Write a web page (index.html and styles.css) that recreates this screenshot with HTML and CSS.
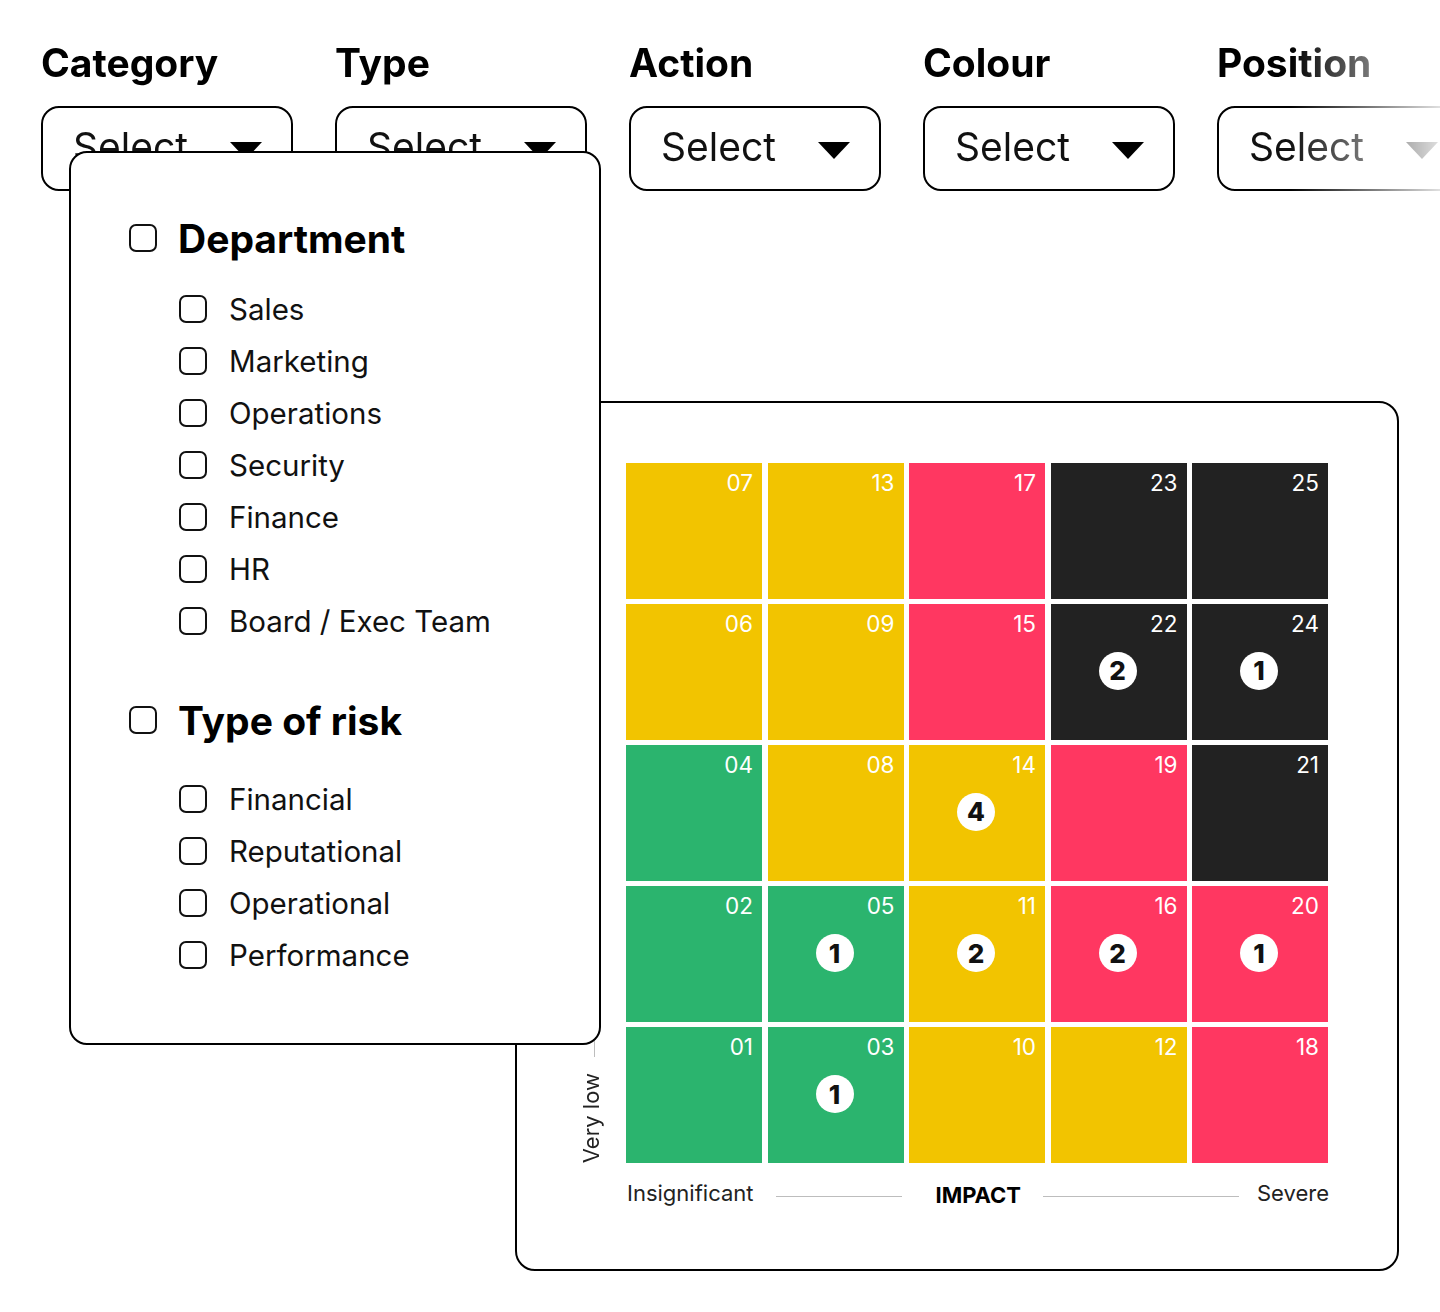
FILE: index.html
```html
<!DOCTYPE html>
<html lang="en">
<head>
<meta charset="utf-8">
<title>Risk matrix filters</title>
<link rel="stylesheet" href="styles.css">
</head>
<body>
<div class="page">
  <div class="filters">
    <div class="filter">
      <div class="filter-label">Category</div>
      <div class="select"><span>Select</span><i class="caret"></i></div>
    </div>
    <div class="filter">
      <div class="filter-label">Type</div>
      <div class="select"><span>Select</span><i class="caret"></i></div>
    </div>
    <div class="filter">
      <div class="filter-label">Action</div>
      <div class="select"><span>Select</span><i class="caret"></i></div>
    </div>
    <div class="filter">
      <div class="filter-label">Colour</div>
      <div class="select"><span>Select</span><i class="caret"></i></div>
    </div>
    <div class="filter">
      <div class="filter-label">Position</div>
      <div class="select"><span>Select</span><i class="caret"></i></div>
    </div>
  </div>

  <div class="matrix-card">
    <div class="matrix-body">
      <div class="y-axis">
        <div class="y-line"></div>
        <div class="y-label">Very low</div>
      </div>
      <div class="grid">
        <div class="cell yellow"><span class="num">07</span></div>
        <div class="cell yellow"><span class="num">13</span></div>
        <div class="cell red"><span class="num">17</span></div>
        <div class="cell dark"><span class="num">23</span></div>
        <div class="cell dark"><span class="num">25</span></div>

        <div class="cell yellow"><span class="num">06</span></div>
        <div class="cell yellow"><span class="num">09</span></div>
        <div class="cell red"><span class="num">15</span></div>
        <div class="cell dark"><span class="num">22</span><span class="badge">2</span></div>
        <div class="cell dark"><span class="num">24</span><span class="badge">1</span></div>

        <div class="cell green"><span class="num">04</span></div>
        <div class="cell yellow"><span class="num">08</span></div>
        <div class="cell yellow"><span class="num">14</span><span class="badge">4</span></div>
        <div class="cell red"><span class="num">19</span></div>
        <div class="cell dark"><span class="num">21</span></div>

        <div class="cell green"><span class="num">02</span></div>
        <div class="cell green"><span class="num">05</span><span class="badge">1</span></div>
        <div class="cell yellow"><span class="num">11</span><span class="badge">2</span></div>
        <div class="cell red"><span class="num">16</span><span class="badge">2</span></div>
        <div class="cell red"><span class="num">20</span><span class="badge">1</span></div>

        <div class="cell green"><span class="num">01</span></div>
        <div class="cell green"><span class="num">03</span><span class="badge">1</span></div>
        <div class="cell yellow"><span class="num">10</span></div>
        <div class="cell yellow"><span class="num">12</span></div>
        <div class="cell red"><span class="num">18</span></div>
      </div>
    </div>
    <div class="x-axis">
      <span class="x-end">Insignificant</span>
      <span class="x-line x-line-left"></span>
      <span class="x-title">IMPACT</span>
      <span class="x-line x-line-right"></span>
      <span class="x-end">Severe</span>
    </div>
  </div>

  <div class="dropdown">
    <div class="group">
      <label class="group-head"><span class="box"></span><span>Department</span></label>
      <ul class="options">
        <li><span class="box"></span>Sales</li>
        <li><span class="box"></span>Marketing</li>
        <li><span class="box"></span>Operations</li>
        <li><span class="box"></span>Security</li>
        <li><span class="box"></span>Finance</li>
        <li><span class="box"></span>HR</li>
        <li><span class="box"></span>Board / Exec Team</li>
      </ul>
    </div>
    <div class="group group-second">
      <label class="group-head"><span class="box"></span><span>Type of risk</span></label>
      <ul class="options options-second">
        <li><span class="box"></span>Financial</li>
        <li><span class="box"></span>Reputational</li>
        <li><span class="box"></span>Operational</li>
        <li><span class="box"></span>Performance</li>
      </ul>
    </div>
  </div>
</div>
</body>
</html>
```
FILE: styles.css
```css
* { box-sizing: border-box; }

html, body {
  margin: 0;
  padding: 0;
  background: #ffffff;
}

body {
  font-family: Inter, "Noto Sans", "Liberation Sans", sans-serif;
  color: #111111;
  overflow: hidden;
}

.page {
  position: relative;
  width: 1440px;
  height: 1312px;
}

/* Filters */
.filters {
  display: flex;
  gap: 42px;
  padding: 40px 0 0 41px;
  width: 1440px;
  overflow: hidden;
  -webkit-mask-image: linear-gradient(90deg, #000 0, #000 1290px, rgba(0,0,0,0.12) 1440px);
  mask-image: linear-gradient(90deg, #000 0, #000 1290px, rgba(0,0,0,0.12) 1440px);
  -webkit-mask-repeat: no-repeat;
  mask-repeat: no-repeat;
}

.filter {
  flex: 0 0 252px;
  display: flex;
  flex-direction: column;
}

.filter-label {
  font-size: 39px;
  line-height: 46px;
  font-weight: 700;
  color: #000;
}

.select {
  margin-top: 20px;
  height: 85px;
  border: 2px solid #000;
  border-radius: 18px;
  display: flex;
  align-items: center;
  justify-content: space-between;
  padding: 0 29px 0 30px;
  font-size: 39px;
  color: #111;
}

.select span {
  line-height: 42px;
  margin-top: -4px;
}

.caret {
  width: 0;
  height: 0;
  border-left: 16.5px solid transparent;
  border-right: 16.5px solid transparent;
  border-top: 17px solid #000;
  margin-top: 3px;
}

/* Matrix card */
.matrix-card {
  margin: 210px 0 0 515px;
  width: 884px;
  height: 870px;
  border: 2px solid #000;
  border-radius: 20px;
  padding: 60px 0 0 0;
  background: #fff;
}

.matrix-body {
  display: flex;
}

.y-axis {
  width: 109px;
  display: flex;
  flex-direction: column;
  align-items: center;
  padding-left: 62px;
  padding-right: 23px;
}

.y-line {
  flex: 1;
  width: 1px;
  background: #bdbdbd;
  margin-bottom: 16px;
  margin-left: 6px;
}

.y-label {
  writing-mode: vertical-rl;
  transform: rotate(180deg);
  font-size: 22px;
  line-height: 24px;
  color: #222;
  white-space: nowrap;
}

.grid {
  width: 702px;
  height: 700px;
  display: grid;
  grid-template-columns: repeat(5, 1fr);
  grid-template-rows: repeat(5, 1fr);
  gap: 5.5px;
}

.cell {
  display: grid;
  grid-template-areas: "c";
}

.cell > * { grid-area: c; }

.yellow { background: #f2c400; }
.red { background: #ff3761; }
.green { background: #2bb46e; }
.dark { background: #222222; }

.num {
  justify-self: end;
  align-self: start;
  margin: 7px 9px 0 0;
  color: #fff;
  font-size: 22.5px;
  line-height: 26px;
}

.badge {
  place-self: center;
  width: 38px;
  height: 38px;
  border-radius: 50%;
  background: #fff;
  color: #111;
  font-weight: 800;
  font-size: 26px;
  display: flex;
  align-items: center;
  justify-content: center;
  position: relative;
  top: -1px;
  left: -1px;
}

/* X axis */
.x-axis {
  margin: 14px 0 0 110px;
  width: 702px;
  display: flex;
  align-items: center;
  font-size: 22px;
  line-height: 28px;
  color: #222;
}

.x-line {
  height: 1px;
  background: #bdbdbd;
  margin-top: 6px;
}

.x-line-left {
  width: 126px;
  margin-left: 23px;
  margin-right: 33px;
}

.x-line-right {
  flex: 1;
  margin-left: 22px;
  margin-right: 18px;
}

.x-title {
  font-weight: 700;
  font-size: 22px;
  color: #000;
  margin-top: 4px;
}

/* Dropdown overlay */
.dropdown {
  position: absolute;
  left: 69px;
  top: 151px;
  width: 532px;
  height: 894px;
  background: #fff;
  border: 2px solid #000;
  border-radius: 18px;
  padding: 63px 0 0 58px;
  z-index: 5;
}

.group-head {
  display: flex;
  align-items: center;
  gap: 21px;
  height: 44px;
  font-size: 39px;
  font-weight: 700;
  color: #000;
}

.box {
  flex: 0 0 28px;
  width: 28px;
  height: 28px;
  border: 2px solid #111;
  border-radius: 7px;
  background: #fff;
}

.options {
  list-style: none;
  margin: 23px 0 0 50px;
  padding: 0;
}

.options li {
  display: flex;
  align-items: center;
  gap: 22px;
  height: 52px;
  font-size: 29.5px;
  color: #111;
}

.group-second {
  margin-top: 51px;
}

.options-second {
  margin-top: 31px;
}
```
